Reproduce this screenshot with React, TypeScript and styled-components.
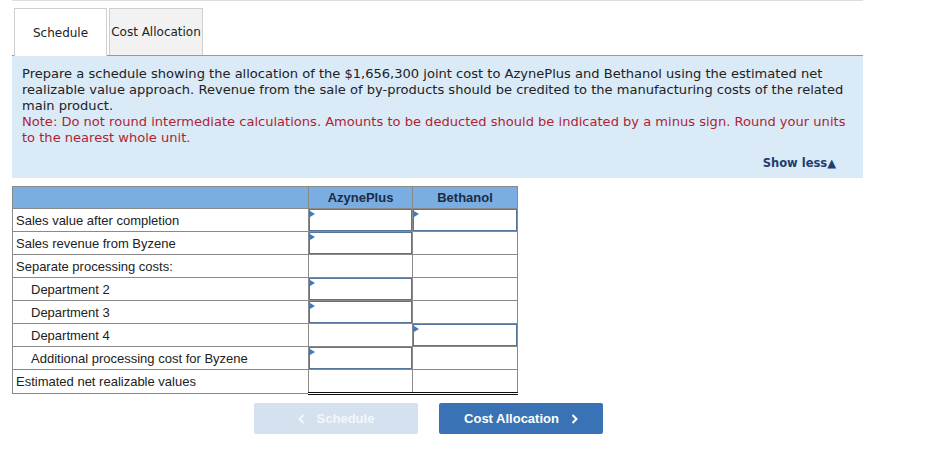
import React from "react";
import styled, { createGlobalStyle } from "styled-components";

const Global = createGlobalStyle`
  html, body { margin: 0; padding: 0; background: #fff; }
  body { font-family: "DejaVu Sans", Verdana, sans-serif; color: #222; }
`;

const Page = styled.div`
  width: 851px;
  margin-left: 12px;
  border-top: 1px solid #dedede;
`;

const TabBar = styled.div`
  display: flex;
  gap: 2px;
  margin-top: 7px;
  padding-left: 2px;
  border-bottom: 1px solid #9a9a9a;
`;

const Tab = styled.div<{ $active?: boolean }>`
  width: ${(p) => (p.$active ? 91 : 92)}px;
  display: flex;
  align-items: center;
  justify-content: center;
  font-size: 12px;
  color: #222;
  background: ${(p) => (p.$active ? "#fff" : "#f2f2f2")};
  border: 1px solid #cfcfcf;
  border-bottom: none;
  white-space: nowrap;
  margin-bottom: ${(p) => (p.$active ? "-1px" : "0")};
  height: ${(p) => (p.$active ? "47px" : "46px")};
`;

const Panel = styled.div`
  background: #daeaf7;
  padding: 10px 12px 8px 10px;
  font-size: 13.05px;
  line-height: 16px;
  color: #222;
`;

const Note = styled.div`
  color: #b01f35;
`;

const ShowLess = styled.div`
  text-align: right;
  font-size: 11.5px;
  font-weight: bold;
  color: #1d3f6e;
  margin-top: 10px;
  margin-right: 15px;
  line-height: 14px;
`;

const Table = styled.table`
  margin-top: 8px;
  border-collapse: collapse;
  font-family: "Liberation Sans", Arial, sans-serif;
  font-size: 13px;
  color: #222;
`;

const HeadCell = styled.th<{ $w: number }>`
  width: ${(p) => p.$w}px;
  height: 21px;
  padding: 0;
  background: #7aaee3;
  border: 1px solid #8a8a8a;
  font-weight: bold;
  color: #1b2b44;
  text-align: center;
`;

const LabelCell = styled.td<{ $indent?: boolean }>`
  height: 22px;
  padding: 0 0 0 ${(p) => (p.$indent ? 18 : 3)}px;
  border: 1px solid #8a8a8a;
`;

const ValueCell = styled.td<{ $total?: boolean }>`
  padding: 0;
  height: 22px;
  border: 1px solid #8a8a8a;
  ${(p) =>
    p.$total
      ? `border-top: 1px solid #111; border-bottom: 3px double #111;`
      : ""}
`;

const InputBox = styled.div`
  position: relative;
  box-sizing: border-box;
  height: 22px;
  border: 1.5px solid #56759a;
  background: #fff;
`;

const Marker = styled.span`
  position: absolute;
  left: 0;
  top: 1px;
  width: 0;
  height: 0;
  border-top: 3.5px solid transparent;
  border-bottom: 3.5px solid transparent;
  border-left: 5px solid #3f7bc4;
`;

const Buttons = styled.div`
  display: flex;
  gap: 21px;
  margin: 8px 0 0 242px;
`;

const NavButton = styled.button<{ $disabled?: boolean }>`
  width: 164px;
  height: 31px;
  border: none;
  border-radius: 2px;
  font-family: "Liberation Sans", Arial, sans-serif;
  font-size: 13px;
  font-weight: bold;
  display: flex;
  align-items: center;
  justify-content: center;
  gap: 12px;
  background: ${(p) => (p.$disabled ? "#d5e1ef" : "#3a72b6")};
  color: ${(p) => (p.$disabled ? "#f4f7fb" : "#fff")};
`;

const Chevron = ({ dir }: { dir: "left" | "right" }) => (
  <svg width="7" height="10" viewBox="0 0 7 10">
    <path
      d={dir === "left" ? "M5.5 1 L1.5 5 L5.5 9" : "M1.5 1 L5.5 5 L1.5 9"}
      fill="none"
      stroke="currentColor"
      strokeWidth="2"
    />
  </svg>
);

type Row = {
  label: string;
  indent?: boolean;
  a?: boolean;
  b?: boolean;
  total?: boolean;
};

const rows: Row[] = [
  { label: "Sales value after completion", a: true, b: true },
  { label: "Sales revenue from Byzene", a: true },
  { label: "Separate processing costs:" },
  { label: "Department 2", indent: true, a: true },
  { label: "Department 3", indent: true, a: true },
  { label: "Department 4", indent: true, b: true },
  { label: "Additional processing cost for Byzene", indent: true, a: true },
  { label: "Estimated net realizable values", total: true },
];

const Input = () => (
  <InputBox>
    <Marker />
  </InputBox>
);

export default function App() {
  return (
    <>
      <Global />
      <Page>
        <TabBar>
          <Tab $active>Schedule</Tab>
          <Tab>Cost Allocation</Tab>
        </TabBar>
        <Panel>
          Prepare a schedule showing the allocation of the $1,656,300 joint cost to
          AzynePlus and Bethanol using the estimated net realizable value approach.
          Revenue from the sale of by-products should be credited to the manufacturing
          costs of the related main product.
          <Note>
            Note: Do not round intermediate calculations. Amounts to be deducted should
            be indicated by a minus sign. Round your units to the nearest whole unit.
          </Note>
          <ShowLess>Show less▲</ShowLess>
        </Panel>
        <Table>
          <thead>
            <tr>
              <HeadCell $w={295} />
              <HeadCell $w={103}>AzynePlus</HeadCell>
              <HeadCell $w={104}>Bethanol</HeadCell>
            </tr>
          </thead>
          <tbody>
            {rows.map((r) => (
              <tr key={r.label}>
                <LabelCell $indent={r.indent}>{r.label}</LabelCell>
                <ValueCell $total={r.total}>{r.a && <Input />}</ValueCell>
                <ValueCell $total={r.total}>{r.b && <Input />}</ValueCell>
              </tr>
            ))}
          </tbody>
        </Table>
        <Buttons>
          <NavButton $disabled>
            <Chevron dir="left" />
            Schedule
          </NavButton>
          <NavButton>
            Cost Allocation
            <Chevron dir="right" />
          </NavButton>
        </Buttons>
      </Page>
    </>
  );
}
